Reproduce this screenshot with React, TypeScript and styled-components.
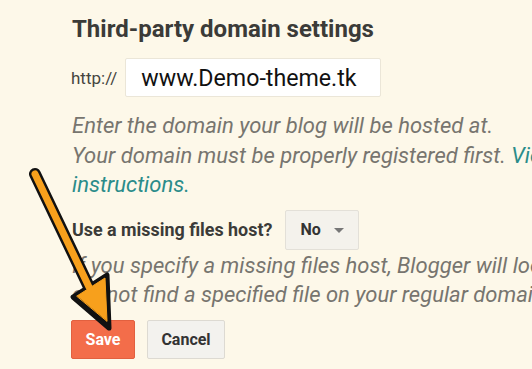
import React from "react";
import styled, { createGlobalStyle } from "styled-components";

const Global = createGlobalStyle`
  html, body { margin: 0; padding: 0; }
  body {
    background: #fdf8e9;
    font-family: Roboto, "Liberation Sans", Arial, sans-serif;
    overflow: hidden;
    width: 532px;
    height: 369px;
  }
`;

const Page = styled.div`
  position: relative;
  width: 532px;
  height: 369px;
  overflow: hidden;
  box-sizing: border-box;
  padding: 15px 0 0 72px;
  display: flex;
  flex-direction: column;
`;

const Heading = styled.h2`
  margin: 0;
  font-size: 24px;
  font-weight: 700;
  color: #3b3b38;
  line-height: 28px;
  white-space: nowrap;
`;

const DomainRow = styled.div`
  display: flex;
  align-items: center;
  gap: 8px;
  margin-top: 15px;
  margin-left: -1px;
`;

const Prefix = styled.span`
  font-size: 17px;
  color: #454540;
`;

const TextInput = styled.div`
  width: 256px;
  height: 39px;
  box-sizing: border-box;
  background: #ffffff;
  border: 1px solid #ebe6d8;
  border-radius: 2px;
  display: flex;
  align-items: center;
  padding-left: 15px;
  font-size: 23.2px;
  color: #111;
  white-space: nowrap;
`;

const Help = styled.div<{ $top: number }>`
  margin-top: ${(p) => p.$top}px;
  font-size: 22px;
  font-style: italic;
  color: #77756f;
  line-height: 29.5px;
`;

const Line = styled.div`
  white-space: nowrap;
`;

const Link = styled.span`
  color: #2b8c8a;
`;

const HostRow = styled.div`
  display: flex;
  align-items: center;
  gap: 13px;
  margin-top: 10px;
`;

const Label = styled.span`
  font-size: 17.9px;
  font-weight: 700;
  color: #3b3b38;
`;

const Select = styled.div`
  width: 74px;
  height: 40px;
  box-sizing: border-box;
  background: #f4f2ec;
  border: 1px solid #e3e0d8;
  border-radius: 2px;
  display: flex;
  align-items: center;
  padding-left: 14px;
  gap: 13px;
  font-size: 16px;
  font-weight: 700;
  color: #333;
`;

const Caret = styled.span`
  width: 0;
  height: 0;
  border-left: 5px solid transparent;
  border-right: 5px solid transparent;
  border-top: 5px solid #777;
  margin-top: 2px;
`;

const Buttons = styled.div`
  display: flex;
  gap: 12px;
  margin-top: 10px;
  margin-left: -1px;
`;

const Button = styled.div<{ $primary?: boolean }>`
  height: 39px;
  box-sizing: border-box;
  width: ${(p) => (p.$primary ? 64 : 78)}px;
  display: flex;
  align-items: center;
  justify-content: center;
  border-radius: 2px;
  font-size: 16px;
  font-weight: 700;
  background: ${(p) => (p.$primary ? "#f36d4a" : "#f3f2ee")};
  color: ${(p) => (p.$primary ? "#fff" : "#333")};
  border: 1px solid ${(p) => (p.$primary ? "#e2603f" : "#dddad2")};
`;

const ArrowOverlay = styled.svg`
  position: absolute;
  left: 0;
  top: 0;
  pointer-events: none;
`;

export default function App() {
  return (
    <>
      <Global />
      <Page>
        <Heading>Third-party domain settings</Heading>
        <DomainRow>
          <Prefix>http://</Prefix>
          <TextInput>www.Demo-theme.tk</TextInput>
        </DomainRow>
        <Help $top={14}>
          <Line>Enter the domain your blog will be hosted at.</Line>
          <Line>
            Your domain must be properly registered first. <Link>View settings</Link>
          </Line>
          <Line>
            <Link>instructions.</Link>
          </Line>
        </Help>
        <HostRow>
          <Label>Use a missing files host?</Label>
          <Select>
            No <Caret />
          </Select>
        </HostRow>
        <Help $top={1}>
          <Line>If you specify a missing files host, Blogger will look there when it</Line>
          <Line>cannot find a specified file on your regular domain.</Line>
        </Help>
        <Buttons>
          <Button $primary>Save</Button>
          <Button>Cancel</Button>
        </Buttons>
        <ArrowOverlay width="532" height="369" viewBox="0 0 532 369">
          <g strokeLinejoin="round" strokeLinecap="round">
            <path d="M35 174 L89 287" stroke="#111" strokeWidth="12" fill="none" />
            <path
              d="M73 297 L107 275 L109 328 Z"
              fill="#111"
              stroke="#111"
              strokeWidth="5"
            />
            <path d="M35 174 L89 287" stroke="#f7a01c" strokeWidth="7" fill="none" />
            <path
              d="M77 296 L105 278 L107 321 Z"
              fill="#f7a01c"
              stroke="#f7a01c"
              strokeWidth="1"
            />
          </g>
        </ArrowOverlay>
      </Page>
    </>
  );
}
